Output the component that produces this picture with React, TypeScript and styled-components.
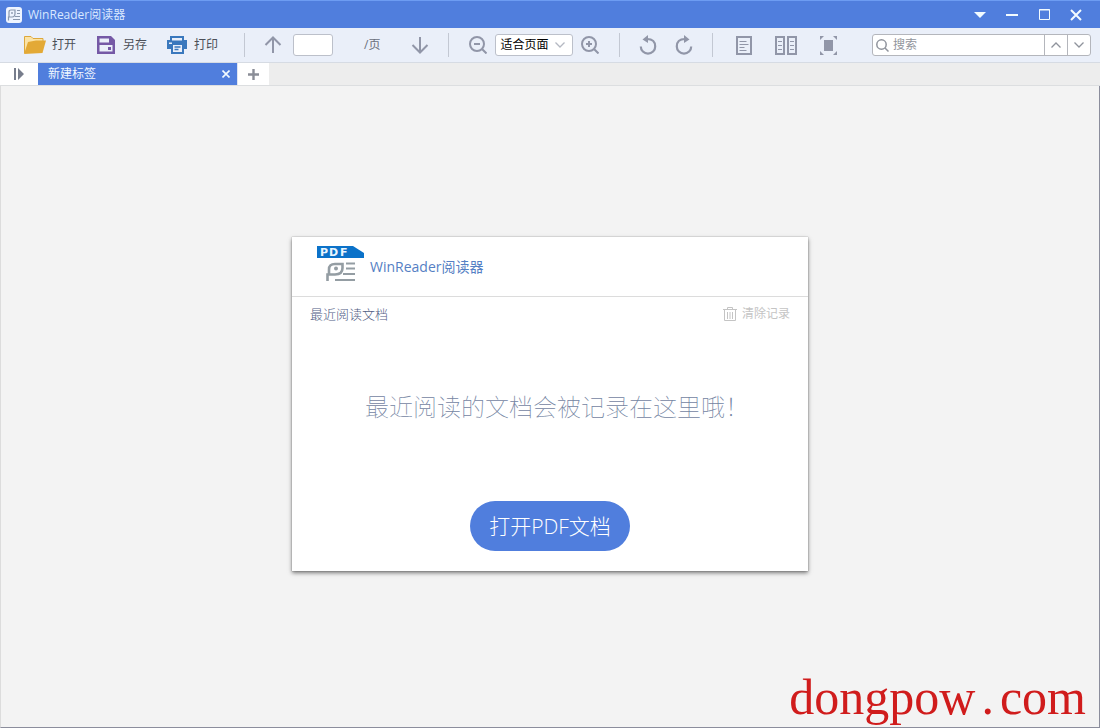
import React from "react";
import styled, { createGlobalStyle } from "styled-components";

const GlobalStyle = createGlobalStyle`
  * { box-sizing: border-box; }
  body {
    margin: 0;
    font-family: "Open Sans", "Noto Sans CJK SC", sans-serif;
    font-size: 12px;
    line-height: 16px;
    color: #4c4f58;
  }
  button, input, select { font: inherit; color: inherit; margin: 0; }
  button { cursor: pointer; }
  svg { display: block; flex: none; }
`;

const Window = styled.div`
  display: flex;
  flex-direction: column;
  min-height: 100vh;
  background: #f3f3f3;
`;

const TitleBar = styled.header`
  display: flex;
  align-items: center;
  height: 28px;
  padding: 0 16px 0 6px;
  gap: 6px;
  background: #507edd;
  border-top: 1px solid #6d9cf2;
  color: #d9e8ff;
`;

const WindowControls = styled.div`
  display: flex;
  margin-left: auto;
  gap: 16px;
`;

const IconButton = styled.button<{ $width?: number; $tone?: string }>`
  display: flex;
  align-items: center;
  justify-content: center;
  width: ${(p) => p.$width ?? 16}px;
  height: 22px;
  padding: 0;
  border: 0;
  background: none;
  color: ${(p) => p.$tone ?? "#9196a8"};
`;

const Toolbar = styled.div`
  display: flex;
  align-items: center;
  height: 35px;
  padding-right: 9px;
  background: #eaeff9;
  border-bottom: 1px solid #d6dbe3;
`;

const ToolGroup = styled.div<{ $gap: number; $pad?: number; $divided?: boolean }>`
  display: flex;
  align-items: center;
  height: 24px;
  gap: ${(p) => p.$gap}px;
  padding: 0 ${(p) => p.$pad ?? 20}px;
  border-right: ${(p) => (p.$divided ? "1px solid #c3c8d3" : "0")};
`;

const FileTools = styled(ToolGroup)`
  padding: 0 26px 0 24px;
`;

const ToolButton = styled.button`
  display: flex;
  align-items: center;
  gap: 6px;
  padding: 0;
  border: 0;
  background: none;
`;

const IconSlot = styled.span`
  display: flex;
  justify-content: center;
  width: 22px;
`;

const PageInput = styled.input`
  width: 40px;
  height: 22px;
  border: 1px solid #bcc0ca;
  border-radius: 3px;
  background: #fff;
  text-align: center;
`;

const PageTotal = styled.label`
  padding: 0 20px 0 19px;
  color: #6b6f7c;
`;

const SelectBox = styled.div`
  position: relative;
  width: 78px;
  color: #b4b8c2;
  svg {
    position: absolute;
    right: 8px;
    top: 7px;
    pointer-events: none;
  }
`;

const ZoomSelect = styled.select`
  appearance: none;
  display: block;
  width: 100%;
  height: 22px;
  padding: 0 4px;
  border: 1px solid #bcc0ca;
  border-radius: 3px;
  background: #fff;
  color: #000;
`;

const SearchBox = styled.div`
  display: flex;
  align-items: center;
  flex: 0 1 219px;
  min-width: 120px;
  height: 22px;
  margin-left: auto;
  padding-left: 3px;
  border: 1px solid #b4b6bc;
  border-radius: 3px;
  background: #fff;
  color: #8f939c;
`;

const SearchInput = styled.input`
  flex: 1;
  min-width: 0;
  padding: 0 4px;
  border: 0;
  outline: 0;
  background: none;
  &::placeholder { color: #92959c; opacity: 1; }
`;

const SearchStep = styled.button`
  display: flex;
  align-items: center;
  justify-content: center;
  width: 23px;
  height: 20px;
  padding: 0;
  border: 0;
  border-left: 1px solid #b4b6bc;
  background: none;
`;

const TabStrip = styled.nav`
  display: flex;
  height: 23px;
  background: #ededed;
  border-bottom: 1px solid #dcdee0;
`;

const PanelToggle = styled.button`
  display: flex;
  align-items: center;
  justify-content: center;
  width: 38px;
  padding: 0;
  border: 0;
  background: #fff;
  color: #777d8c;
`;

const Tab = styled.div`
  display: flex;
  align-items: center;
  justify-content: space-between;
  width: 199px;
  padding: 0 3px 0 10px;
  background: #507edd;
  color: #f2f8ff;
`;

const NewTab = styled.button`
  display: flex;
  align-items: center;
  justify-content: center;
  width: 32px;
  padding: 0;
  border: 0;
  border-left: 1px solid #dfe5f2;
  background: #fff;
  color: #8a8d97;
`;

const Workspace = styled.main`
  position: relative;
  display: flex;
  flex: 1;
  align-items: center;
  justify-content: center;
  padding: 20px 20px 25px;
  border: 1px solid #8b8d9c;
  border-top: 0;
  border-left-color: #dcdcdc;
`;

const Card = styled.section`
  display: flex;
  flex-direction: column;
  align-items: center;
  width: 516px;
  max-width: 100%;
  padding-bottom: 20px;
  background: #fff;
  box-shadow: 0 2px 4px rgba(0, 0, 0, 0.5), 0 0 1px rgba(0, 0, 0, 0.4);
`;

const CardHeader = styled.div`
  display: flex;
  align-self: stretch;
  align-items: center;
  height: 60px;
  padding-left: 25px;
  gap: 6px;
  border-bottom: 1px solid #dcdcdc;
`;

const CardTitle = styled.h1`
  margin: 0;
  font-size: 14px;
  font-weight: 400;
  line-height: 20px;
  color: #5580c4;
`;

const RecentBar = styled.div`
  display: flex;
  align-self: stretch;
  align-items: center;
  justify-content: space-between;
  height: 34px;
  padding: 0 18px;
`;

const RecentTitle = styled.h2`
  margin: 0;
  font-size: 13px;
  font-weight: 300;
  line-height: 16px;
  color: #4f5c84;
  font-family: "Noto Sans CJK SC", sans-serif;
`;

const ClearButton = styled.button`
  display: flex;
  align-items: center;
  gap: 5px;
  padding: 0;
  border: 0;
  background: none;
  color: #c4c4c4;
`;

const EmptyHint = styled.p`
  margin: 58px 0 78px;
  padding-left: 14px;
  font-family: "Noto Sans CJK SC", sans-serif;
  font-size: 24px;
  font-weight: 100;
  line-height: 34px;
  color: #7384a2;
`;

const OpenButton = styled.button`
  width: 160px;
  height: 50px;
  padding: 0;
  border: 0;
  border-radius: 25px;
  background: #507edd;
  color: #fff;
  font-size: 21px;
  font-weight: 300;
  line-height: 28px;
`;

const Watermark = styled.div`
  position: absolute;
  right: 13px;
  bottom: 2px;
  font-family: "Liberation Serif", serif;
  font-size: 50px;
  line-height: 56px;
  color: #d01c1c;
`;

const Dot = styled.span`
  padding: 0 6px;
`;

const Chevron = ({ up }: { up?: boolean }) => (
  <svg width="10" height="8" viewBox="0 0 10 8" fill="none" stroke="currentColor" strokeWidth="1.3">
    <path d={up ? "M.5 6.5 5 2l4.500 4.500" : "M.5 1.500 5 6l4.500-4.500"} />
  </svg>
);

const AppIcon = () => (
  <svg width="16" height="16" viewBox="0 0 16 16">
    <rect width="16" height="16" rx="3" fill="#eef4ff" />
    <g fill="none" stroke="#8997ad" strokeWidth="1.200">
      <path d="M2.500 13.500V10H5M3 10V5q0-2 2-2h4v3.500q0 3.500-3 3.500H5" />
      <path d="M11 3.500h3M11 6.500h3M9 9.500h5M7 12.500h7" />
      <circle cx="6" cy="6" r=".9" fill="#8997ad" stroke="none" />
    </g>
  </svg>
);

const Logo = () => (
  <svg width="47" height="42" viewBox="0 0 47 42">
    <path d="M0 0h36l11 7v5H0z" fill="#0b72c9" />
    <text y="10" fill="#e9f7ff" fontFamily="DejaVu Sans" fontWeight="700" fontSize="11">
      <tspan x="3">P</tspan>
      <tspan x="12">D</tspan>
      <tspan x="23">F</tspan>
    </text>
    <g fill="none" stroke="#949da3" strokeWidth="2.600">
      <path d="M10.500 35v-6.500H18q7.500 0 7.500-6.500v-4H18q-6 0-6 5.500v5" />
      <path d="M29 17.500h9M29 22.500h9M26 28h12M18 34h20" strokeWidth="2" />
      <circle cx="19" cy="22.500" r="2" fill="#949da3" stroke="none" />
    </g>
  </svg>
);

const FolderIcon = () => (
  <svg width="22" height="18" viewBox="0 0 22 18">
    <path d="M.5 17V.5H7l2 2h10V6" fill="#fbe3a6" stroke="#dda83c" />
    <path d="M0 18 4 6l8-1.500h10L18.500 17z" fill="#e3a936" />
  </svg>
);

const SaveIcon = () => (
  <svg width="18" height="18" viewBox="0 0 18 18">
    <path fillRule="evenodd" fill="#7559a6" d="M0 0h14l4 4v14H0zM2.500 2.500v4H12v-4zM2.500 9v6.500h13V9z" />
    <path d="M11 11h3v3h-3z" fill="#7559a6" />
  </svg>
);

const PrintIcon = () => (
  <svg width="20" height="18" viewBox="0 0 20 18">
    <path fillRule="evenodd" fill="#3a78bd" d="M3 0h14v4h3v9h-3v5H4v-5H0V4h3zM5 2v2.500h10V2zM2 6.500V8h3V6.500zM6 9v7h9V9z" />
    <path d="M7.500 11h6M7.500 13.500h4" stroke="#3a78bd" strokeWidth="1.300" />
  </svg>
);

const ArrowIcon = ({ down }: { down?: boolean }) => (
  <svg width="18" height="18" viewBox="0 0 18 18" fill="none" stroke="currentColor" strokeWidth="2">
    <path d={down ? "M9 1v15M1.500 9 9 16.500 16.500 9" : "M9 17V2M1.500 9 9 1.500 16.500 9"} />
  </svg>
);

const ZoomIcon = ({ plus }: { plus?: boolean }) => (
  <svg width="18" height="18" viewBox="0 0 18 18" fill="none" stroke="currentColor" strokeWidth="2">
    <circle cx="8" cy="8" r="7" />
    <path d={plus ? "M5 8h6M8 5v6M13 13l4.500 4.500" : "M5 8h6M13 13l4.500 4.500"} />
  </svg>
);

const RotateIcon = ({ right }: { right?: boolean }) => (
  <svg width="18" height="20" viewBox="0 0 18 20">
    <g transform={right ? "translate(18 0) scale(-1 1)" : undefined}>
      <path d="M8 4q8.200 0 8.200 7.500A7.200 7.200 0 0 1 1.800 11.500" fill="none" stroke="currentColor" strokeWidth="2.200" />
      <path d="M3.500 4.500 9 0v8z" fill="currentColor" />
    </g>
  </svg>
);

const SinglePageIcon = () => (
  <svg width="16" height="19" viewBox="0 0 16 19" fill="none" stroke="currentColor">
    <path d="M1 1h14v17H1z" strokeWidth="2" />
    <path d="M3.500 5.500h7M3.500 8.500h9M3.500 11.500h5M3.500 14.500h7" />
  </svg>
);

const DoublePageIcon = () => (
  <svg width="22" height="19" viewBox="0 0 22 19" fill="none" stroke="currentColor">
    <path d="M1 1h8v17H1zM13 1h8v17h-8z" strokeWidth="2" />
    <path d="M3 5.500h4M3 9.500h4M3 13.500h4M15 5.500h4M15 9.500h4M15 13.500h4" />
  </svg>
);

const FitIcon = () => (
  <svg width="17" height="19" viewBox="0 0 17 19" fill="currentColor">
    <path d="M4 4h9v11H4zM0 0h4L0 4zM17 0v4l-4-4zM0 19v-4l4 4zM17 19h-4l4-4z" />
  </svg>
);

const TrashIcon = () => (
  <svg width="14" height="14" viewBox="0 0 14 14" fill="none" stroke="currentColor">
    <path d="M0 2.500h14M4.500 2V.5h5V2M1.500 3v10.500h11V3M4.500 5v7M7 5v7M9.500 5v7" />
  </svg>
);

export default function App() {
  return (
    <Window>
      <GlobalStyle />
      <TitleBar>
        <AppIcon />
        <span>WinReader阅读器</span>
        <WindowControls>
          <IconButton aria-label="菜单" $tone="#f2fbff">
            <svg width="12" height="6" viewBox="0 0 12 6"><path d="M0 0h12L6 6z" fill="currentColor" /></svg>
          </IconButton>
          <IconButton aria-label="最小化" $tone="#f2fbff">
            <svg width="12" height="2" viewBox="0 0 12 2"><path d="M0 0h12v2H0z" fill="currentColor" /></svg>
          </IconButton>
          <IconButton aria-label="最大化" $tone="#f2fbff">
            <svg width="11" height="11" viewBox="0 0 11 11" fill="none" stroke="currentColor">
              <path d="M.5.5h10v10H.5zM0 1h11" />
            </svg>
          </IconButton>
          <IconButton aria-label="关闭" $tone="#f2fbff">
            <svg width="12" height="12" viewBox="0 0 12 12"><path d="m1 1 10 10M11 1 1 11" stroke="currentColor" strokeWidth="2" /></svg>
          </IconButton>
        </WindowControls>
      </TitleBar>

      <Toolbar>
        <FileTools $gap={19} $divided>
          <ToolButton><IconSlot><FolderIcon /></IconSlot>打开</ToolButton>
          <ToolButton><IconSlot><SaveIcon /></IconSlot>另存</ToolButton>
          <ToolButton><IconSlot><PrintIcon /></IconSlot>打印</ToolButton>
        </FileTools>
        <ToolGroup $gap={12} $divided>
          <IconButton aria-label="上一页"><ArrowIcon /></IconButton>
          <PageInput id="page" />
          <PageTotal htmlFor="page">/页</PageTotal>
          <IconButton aria-label="下一页"><ArrowIcon down /></IconButton>
        </ToolGroup>
        <ToolGroup $gap={8} $divided>
          <IconButton aria-label="缩小" $width={18}><ZoomIcon /></IconButton>
          <SelectBox>
            <ZoomSelect aria-label="缩放"><option>适合页面</option></ZoomSelect>
            <Chevron />
          </SelectBox>
          <IconButton aria-label="放大" $width={18}><ZoomIcon plus /></IconButton>
        </ToolGroup>
        <ToolGroup $gap={20} $divided>
          <IconButton aria-label="向左旋转"><RotateIcon /></IconButton>
          <IconButton aria-label="向右旋转"><RotateIcon right /></IconButton>
        </ToolGroup>
        <ToolGroup $gap={23} $pad={23}>
          <IconButton aria-label="单页"><SinglePageIcon /></IconButton>
          <IconButton aria-label="双页" $width={22}><DoublePageIcon /></IconButton>
          <IconButton aria-label="全屏"><FitIcon /></IconButton>
        </ToolGroup>
        <SearchBox>
          <svg width="13" height="13" viewBox="0 0 13 13" fill="none" stroke="currentColor" strokeWidth="1.500">
            <circle cx="5.500" cy="5.500" r="4.700" />
            <path d="m9 9 3.500 3.500" />
          </svg>
          <SearchInput aria-label="搜索" placeholder="搜索" />
          <SearchStep aria-label="上一个"><Chevron up /></SearchStep>
          <SearchStep aria-label="下一个"><Chevron /></SearchStep>
        </SearchBox>
      </Toolbar>

      <TabStrip>
        <PanelToggle aria-label="侧栏">
          <svg width="10" height="12" viewBox="0 0 10 12" fill="currentColor">
            <path d="M0 0h2v12H0zM4 0l6 6-6 6z" />
          </svg>
        </PanelToggle>
        <Tab>
          <span>新建标签</span>
          <IconButton aria-label="关闭标签" $tone="#f2fbff">
            <svg width="8" height="8" viewBox="0 0 8 8"><path d="m.5.5 7 7M7.500.5l-7 7" stroke="currentColor" strokeWidth="1.600" /></svg>
          </IconButton>
        </Tab>
        <NewTab aria-label="新标签">
          <svg width="11" height="11" viewBox="0 0 11 11"><path d="M0 5.500h11M5.500 0v11" stroke="currentColor" strokeWidth="2.400" /></svg>
        </NewTab>
      </TabStrip>

      <Workspace>
        <Card>
          <CardHeader>
            <Logo />
            <CardTitle>WinReader阅读器</CardTitle>
          </CardHeader>
          <RecentBar>
            <RecentTitle>最近阅读文档</RecentTitle>
            <ClearButton><TrashIcon />清除记录</ClearButton>
          </RecentBar>
          <EmptyHint>最近阅读的文档会被记录在这里哦！</EmptyHint>
          <OpenButton>打开PDF文档</OpenButton>
        </Card>
        <Watermark>dongpow<Dot>.</Dot>com</Watermark>
      </Workspace>
    </Window>
  );
}
